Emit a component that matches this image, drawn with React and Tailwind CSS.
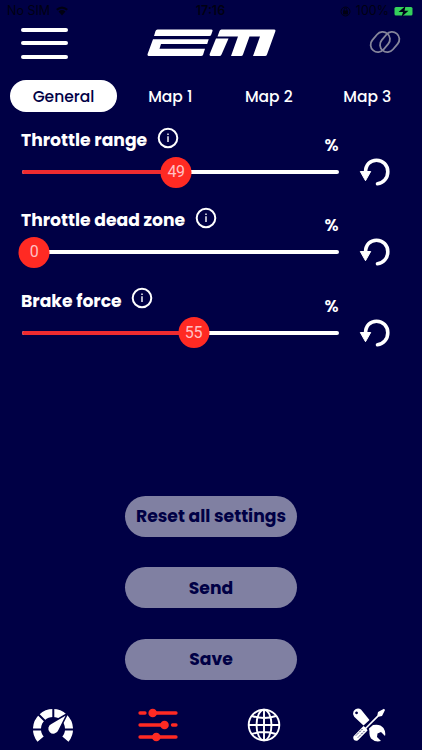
import { useState } from 'react';

const tabs = ['General', 'Map 1', 'Map 2', 'Map 3'];

const settings = [
  { id: 'range', label: 'Throttle range', width: 'w-[126px]', value: 49 },
  { id: 'dead', label: 'Throttle dead zone', width: 'w-[164px]', value: 0 },
  { id: 'brake', label: 'Brake force', width: 'w-[100px]', value: 55 },
];

function StatusBar() {
  return (
    <div className="h-[22px] shrink-0 grid grid-cols-3 items-center pl-[7px] pr-[8px] font-['Inter',sans-serif] text-[12.500px] text-[#000012]">
      <div className="flex items-center gap-[6px]">
        <span>No SIM</span>
        <svg width="12" height="10" viewBox="0 0 12 10" fill="currentColor">
          <path d="M0 3Q6-2 12 3L10.500 4.600Q6 1 1.500 4.600ZM2.500 5.500Q6 2.700 9.500 5.500L6 9.500Z" />
        </svg>
      </div>
      <span className="text-center font-semibold">17:16</span>
      <div className="flex items-center justify-end gap-[5px]">
        <svg width="11" height="11" viewBox="0 0 11 11" fill="none" stroke="currentColor">
          <circle cx="5.500" cy="5.500" r="4.500" />
          <rect x="3.500" y="5" width="4" height="3" fill="currentColor" />
          <path d="M4.200 5V3.500a1.300 1.300 0 0 1 2.600 0V5" />
        </svg>
        <span>100%</span>
        <svg width="20" height="11" viewBox="0 0 20 11">
          <rect x="0.500" y="1" width="18" height="8.500" rx="1.500" fill="#35d15b" />
          <path d="M11.500 0 4.500 6H9L7.500 11 14.500 4.700H10.500Z" fill="#000018" />
        </svg>
      </div>
    </div>
  );
}

function Logo() {
  return (
    <svg width="130" height="28" viewBox="0 0 130 28" fill="#fff">
      <path d="M10.500.5H64.500q1.500 0 1 1.500L64.300 5.500q-.5 1.500-2 1.500H7L8.500 2q.5-1.500 2-1.500Z" />
      <path d="M6 10.300H61.700L60.200 15H14L12.500 19.700H58L56 26q-.5 1-2 1H2.500Q0 27 .6 25Z" />
      <path d="M74.500.5H127q2 0 1.300 2L120 25.500q-.5 1.500-2 1.500H106L113 7.500H102.500L96 25.500q-.5 1.500-2 1.500H84L91 7.500H70.500L72.500 2q.5-1.500 2-1.500Z" />
      <path d="M69 9.500H81.500L74.500 25.500q-.7 1.500-2 1.500H64.500q-2.500 0-1.800-2Z" />
    </svg>
  );
}

function LinkIcon() {
  return (
    <svg width="32" height="24" viewBox="0 0 32 24" fill="none" stroke="#85859b" strokeWidth="1.800">
      <rect x="-11" y="-7.300" width="22" height="14.600" rx="7.300" transform="translate(11.300 12) rotate(-50)" />
      <rect x="-11" y="-7.300" width="22" height="14.600" rx="7.300" transform="translate(20.700 12) rotate(-50)" />
    </svg>
  );
}

function InfoIcon() {
  return (
    <svg width="22" height="22" viewBox="0 0 22 22" fill="none" stroke="#fff">
      <circle cx="11" cy="11" r="9.300" strokeWidth="2" />
      <path d="M11 9.300V15M11 6.500V8.100" strokeWidth="1.400" />
    </svg>
  );
}

function ResetIcon() {
  return (
    <svg width="32" height="30" viewBox="0 0 32 30" fill="none">
      <path d="M6.500 15.500C6.500 7.500 11.500 3.200 17.500 3.200C24 3.200 28.800 8.200 28.800 14.700C28.800 21.300 24.300 26 18.500 26.800" stroke="#fff" strokeWidth="3.600" strokeLinecap="round" />
      <path d="M1.300 14.500H11.700L6.500 23.700Z" fill="#fff" stroke="#fff" strokeLinejoin="round" />
    </svg>
  );
}

function SettingRow({ label, width, value }) {
  // thumb centre travels from 12px inside the left end of the track
  const left = 12 + value * 2.9;
  return (
    <div className="h-[80.300px] flex justify-between pl-[21px] pr-[31px]">
      <div className="w-[317.500px]">
        <div className="h-[30.600px] flex justify-between">
          <div className="flex gap-[10px]">
            <span className={`${width} pt-[2px] text-[17.200px] leading-[25px] font-bold whitespace-nowrap`}>{label}</span>
            <div className="pt-[0.500px]"><InfoIcon /></div>
          </div>
          <span className="pt-[7px] text-[17px] leading-[25px] font-semibold">%</span>
        </div>
        <div className="relative h-[31px] flex items-center">
          <div className="ml-px h-1 flex-1 rounded-full bg-white overflow-hidden">
            <div className="h-full bg-[#ee2b30]" style={{ width: left }} />
          </div>
          <div
            className="absolute top-0 size-[31px] -translate-x-1/2 rounded-full bg-[#ff2a23] flex items-center justify-center font-['Roboto',sans-serif] text-[16px] tracking-[-0.300px] text-[#ffc0c4]"
            style={{ left: left + 1 }}
          >
            {value}
          </div>
        </div>
      </div>
      <button className="pt-[31px] self-start">
        <ResetIcon />
      </button>
    </div>
  );
}

function GaugeIcon() {
  return (
    <svg width="42" height="36" viewBox="0 0 42 36">
      <path d="M8.600 32.100A16 16 0 1 1 33.400 32.100" fill="none" stroke="#fff" strokeWidth="8" />
      <path d="M0 22.500H10M32 22.500H42M21.300 1V11M6 7 13.500 14.500" stroke="#000045" strokeWidth="2" />
      <path d="M35.500 6.500 27 23.500A5.900 5.900 0 1 1 19.500 16Z" fill="#fff" stroke="#000045" strokeWidth="1.600" />
    </svg>
  );
}

function SlidersIcon() {
  return (
    <svg width="40" height="34" viewBox="0 0 40 34" fill="#ff2a23" stroke="#ff2a23" strokeWidth="3.300" strokeLinecap="round">
      <path d="M2 5H7M14 5H38M2 17H27M34.500 17H38M2 29H16M19 29H38" />
      <g stroke="none">
        <circle cx="14.700" cy="5" r="4.300" />
        <circle cx="26.500" cy="17" r="4.300" />
        <circle cx="18.300" cy="29" r="4.300" />
      </g>
    </svg>
  );
}

function GlobeIcon() {
  return (
    <svg width="34" height="34" viewBox="0 0 34 34" fill="none" stroke="#fff" strokeWidth="1.900">
      <circle cx="17" cy="17" r="15.300" />
      <ellipse cx="17" cy="17" rx="7.500" ry="15.300" />
      <path d="M17 1.700V32.300M1.700 17H32.300M5 8Q17 12 29 8M5 26Q17 22 29 26" />
    </svg>
  );
}

function ToolsIcon() {
  return (
    <svg width="34" height="34" viewBox="0 0 34 34" fill="#fff">
      <path fillRule="evenodd" d="M1.200 6.500A5 5 0 0 1 9 1.500L17.500 12 11.500 17.500 2.200 8.800ZM4.500 3.500a1.400 1.400 0 1 0 .1 0Z" />
      <path d="M32 0.800 26 4 25.300 7.500 13.500 19.500 11.500 18 1.500 28.200Q.5 30.500 2 32 4 33.500 6 32.300L15.500 22.500 14.500 20.500 26.500 8.700 30 8 33 2Z" />
      <path d="M17 20.500 21 17Q28 15.500 31.500 20 34 24 33 28L29 24 25.500 25.500 25 29 29 33Q23 34.500 19 30.500 17 27 17.500 24Z" />
      <path d="M4 27.500 10.500 21M6 29.500 12.500 23" stroke="#000045" strokeWidth=".9" strokeDasharray="1.500 1" />
    </svg>
  );
}

export default function App() {
  const [active, setActive] = useState('General');
  return (
    <div className="h-[750px] w-[422px] flex flex-col overflow-hidden bg-[#000045] text-white font-['Poppins','Inter',sans-serif]">
      <StatusBar />
      <header className="h-[58px] shrink-0 flex items-start px-[21px]">
        <button className="mt-[5.500px] w-[47px] flex flex-col gap-[9.500px]">
          <span className="h-1 w-full rounded-full bg-white" />
          <span className="h-1 w-full rounded-full bg-white" />
          <span className="h-1 w-full rounded-full bg-white" />
        </button>
        <div className="mt-[7px] ml-[79px]"><Logo /></div>
        <div className="mt-[8px] ml-auto"><LinkIcon /></div>
      </header>

      <nav className="h-8 shrink-0 flex pl-[10px] text-[15.500px] font-medium">
        {tabs.map((tab) => (
          <button
            key={tab}
            onClick={() => setActive(tab)}
            className={`h-8 pt-px rounded-full ${active === tab ? 'w-[107px] bg-white text-[#000045]' : 'w-[98.500px]'} ${tab === 'Map 1' ? 'ml-[4px]' : ''}`}
          >
            {tab}
          </button>
        ))}
      </nav>

      <main className="flex-1 pt-[14px]">
        {settings.map((s) => (
          <SettingRow key={s.id} {...s} />
        ))}
        <div className="mt-[129.100px] flex flex-col items-center gap-[30.500px] text-[17.200px] font-bold text-[#000045]">
          <button className="h-[41px] w-[172px] rounded-full bg-[#8080a2] pt-px whitespace-nowrap">Reset all settings</button>
          <button className="h-[41px] w-[172px] rounded-full bg-[#8080a2] pt-px">Send</button>
          <button className="h-[41px] w-[172px] rounded-full bg-[#8080a2] pt-px">Save</button>
        </div>
      </main>

      <footer className="h-[50px] shrink-0 grid grid-cols-4 justify-items-center items-center">
        <GaugeIcon />
        <SlidersIcon />
        <GlobeIcon />
        <ToolsIcon />
      </footer>
    </div>
  );
}
